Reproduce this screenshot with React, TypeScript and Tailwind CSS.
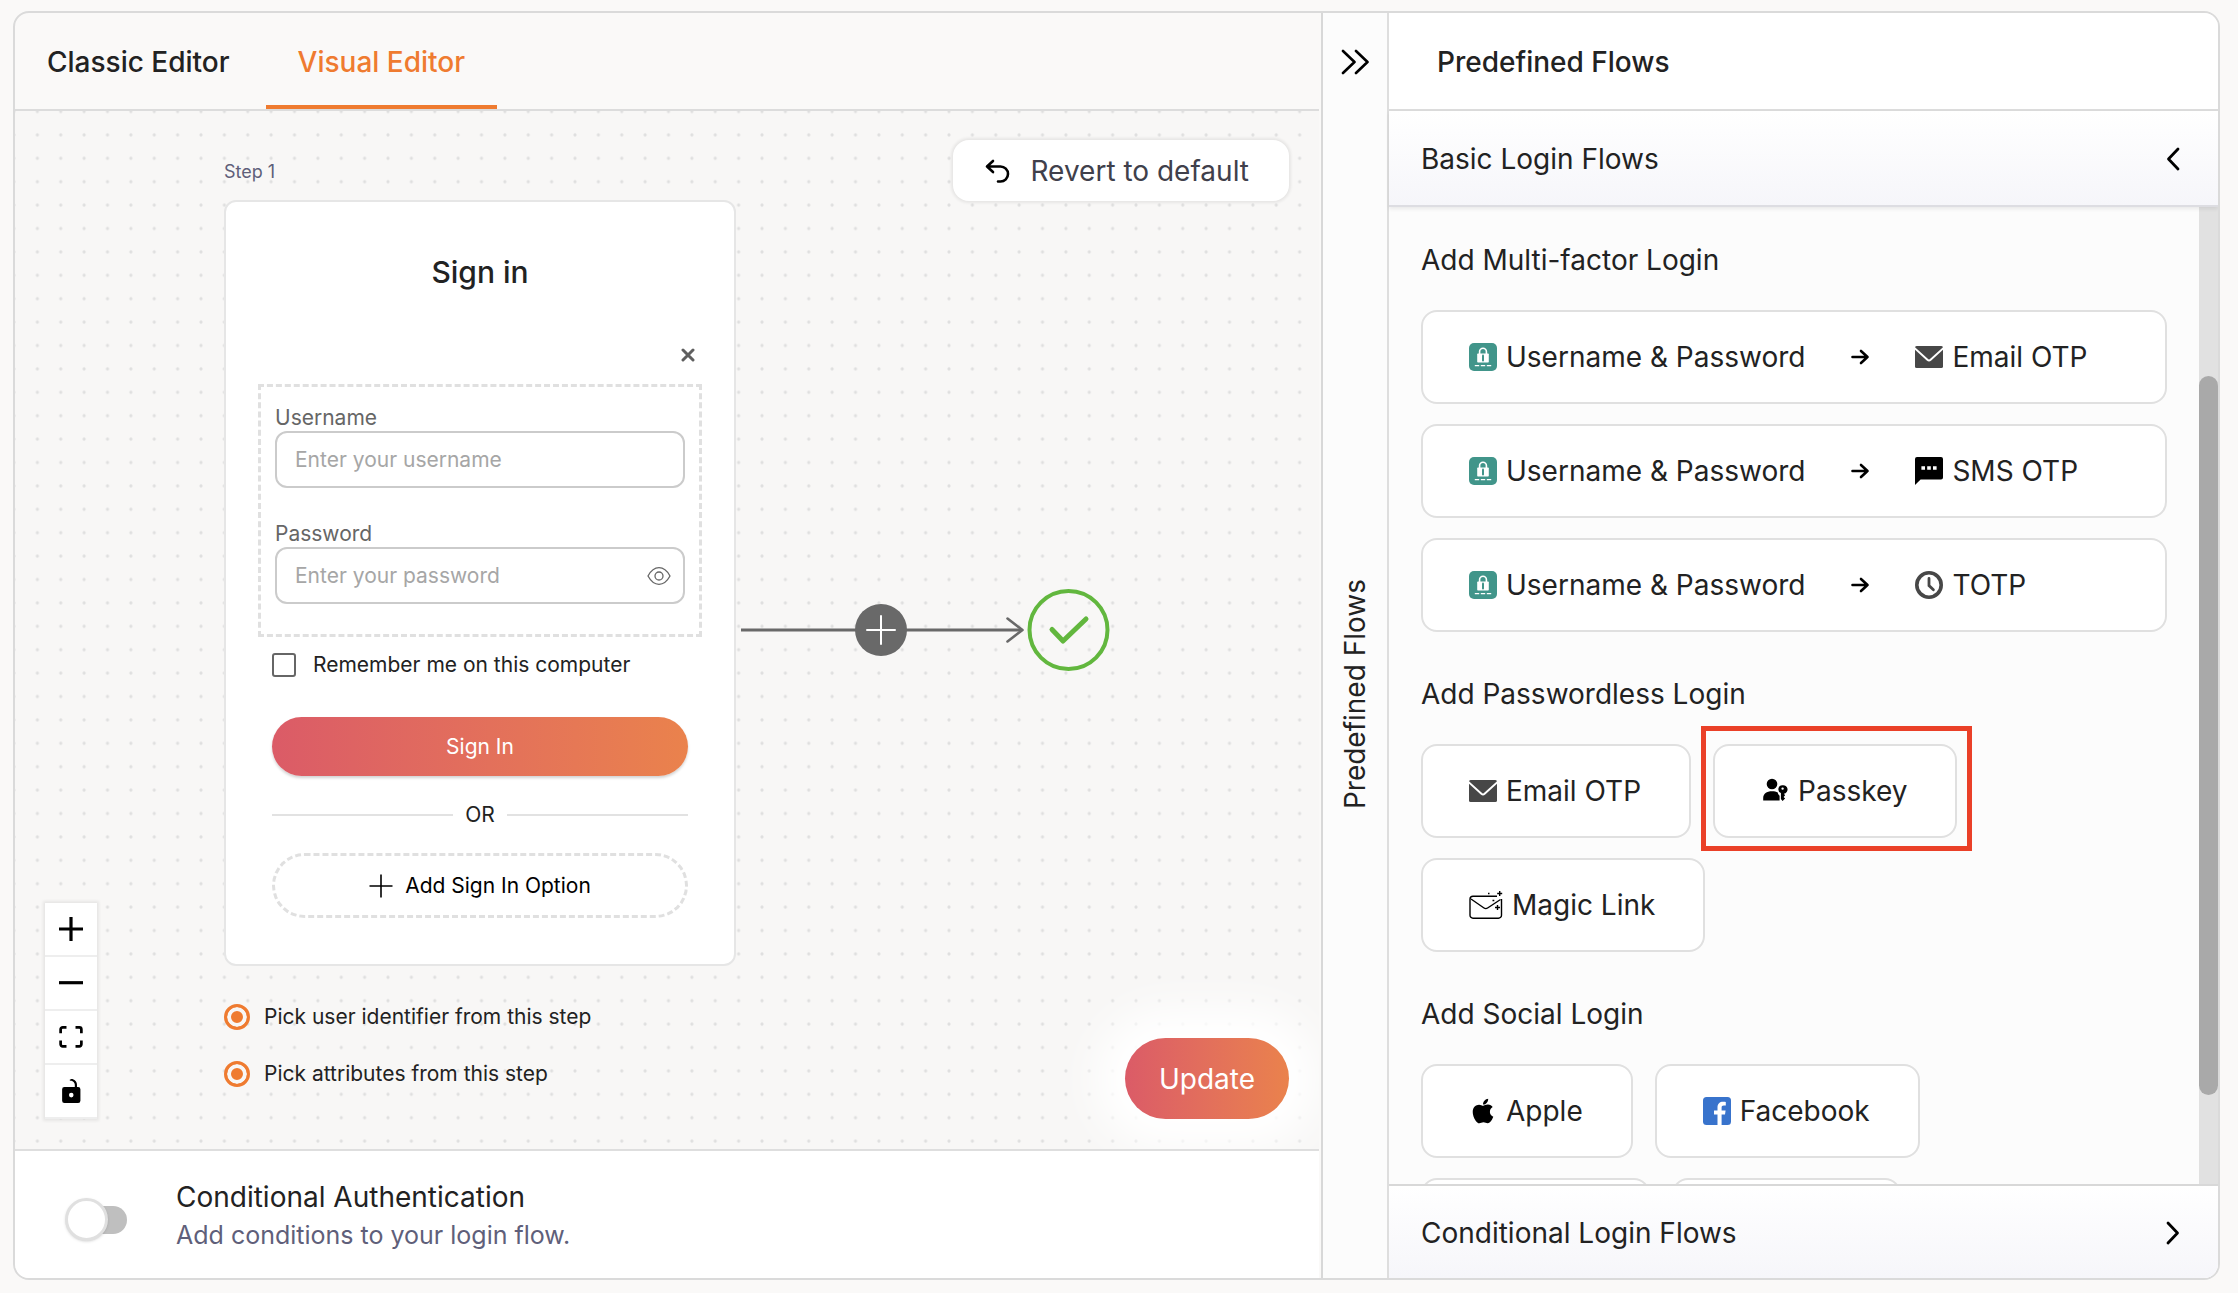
import React from "react";
import { FaApple } from "react-icons/fa";

const LockBadge = () => (
  <svg viewBox="0 0 28 28" className="size-7 shrink-0" aria-hidden="true">
    <rect width="28" height="28" rx="5" fill="#41958a" />
    <path d="M10.6 11V8.6a3.4 3.4 0 0 1 6.8 0V11" fill="none" stroke="#fff" strokeWidth="1.6" />
    <rect x="8.2" y="10.5" width="11.6" height="9" rx="0.8" fill="#fff" />
    <path d="M14 12.6v4.8" stroke="#41958a" strokeWidth="2" strokeLinecap="round" />
    <path d="M5.8 22.6h4.4M11.8 22.6h4.4M17.8 22.6h4.4" stroke="#fff" strokeWidth="1.4" />
  </svg>
);

const MailIcon = () => (
  <svg viewBox="0 0 28 28" className="size-7 shrink-0" aria-hidden="true">
    <rect y="3" width="28" height="22" rx="1.6" fill="#474747" />
    <path d="M-1 4.6 12.4 16.8q1.6 1.300 3.200 0L29 4.6" fill="none" stroke="#fff" strokeWidth="2" />
  </svg>
);

const ChatIcon = () => (
  <svg viewBox="0 0 28 28" className="size-7 shrink-0" aria-hidden="true">
    <path d="M2 0h24a2 2 0 0 1 2 2v18.4a2 2 0 0 1-2 2H5.6L0 28V2a2 2 0 0 1 2-2z" fill="#000" />
    <path d="M6.4 9.200h3.600v3.600H6.400zM12.200 9.200h3.600v3.600h-3.600zM18 9.200h3.600v3.600H18z" fill="#fff" />
  </svg>
);

const ClockIcon = () => (
  <svg viewBox="0 0 28 28" className="size-7 shrink-0" fill="none" stroke="#474747" aria-hidden="true">
    <circle cx="14" cy="14" r="12.2" strokeWidth="3.6" />
    <path d="M14 7.4v7.2l4.4 4.2" strokeWidth="2.8" strokeLinecap="round" />
  </svg>
);

const PasskeyIcon = () => (
  <svg viewBox="0 0 28 28" className="size-7 shrink-0" aria-hidden="true">
    <circle cx="11" cy="7" r="5.300" fill="#000" />
    <path d="M2.200 23.500v-2.500c0-4.400 3.400-6.800 8.800-6.800 2.400 0 4.300.5 5.800 1.400.1 1.300.8 2.400 1.800 3.100v4.800z" fill="#000" />
    <path d="M21.600 8.200a4 4 0 0 0-1.700 7.700v6l1.700 2.200 2.500-2.500-1.500-1.700 1.500-1.600-1.200-1.600A4.200 4.200 0 0 0 21.600 8.200zm0 2.200a1.200 1.200 0 1 1 0 2.400 1.200 1.200 0 0 1 0-2.400z" fill="#000" />
  </svg>
);

const MagicMailIcon = () => (
  <svg viewBox="0 0 34 28" className="h-7 w-[34px] shrink-0" fill="none" stroke="#000" aria-hidden="true">
    <path d="M28 5.200H4A3 3 0 0 0 1 8.200v16A3 3 0 0 0 4 27.200h25.500a3 3 0 0 0 3-3V8" strokeWidth="1.400" />
    <path d="M2 8 15 17q1.800 1.200 3.600 0L31.500 8.500" strokeWidth="1.400" />
    <path d="M30.700 0v5M28.200 2.500h5M28.500 14v5M26 16.500h5" strokeWidth="1.400" />
    <path d="M23.500 9.500h1.800M19 2.500h1.500" strokeWidth="1.600" />
  </svg>
);

const AppleIcon = () => <FaApple className="size-7 shrink-0 text-black" aria-hidden="true" />;

const FacebookIcon = () => (
  <svg viewBox="0 0 28 28" className="size-7 shrink-0" aria-hidden="true">
    <rect width="28" height="28" rx="3.500" fill="#3873cc" />
    <path d="M14.500 28V17.500H11V13.500h3.500v-3c0-3.800 2.300-5.700 5.500-5.700 1.300 0 2.300.1 2.800.2v3.600h-2c-1.700 0-2.200.8-2.200 2.100v2.800h4l-.6 4h-3.400V28z" fill="#fff" />
  </svg>
);

const ArrowIcon = () => (
  <svg viewBox="0 0 20 20" className="size-5 shrink-0" fill="none" stroke="#000" strokeWidth="2.600" strokeLinecap="round" strokeLinejoin="round" aria-hidden="true">
    <path d="M2.500 10h15M11 4l6.500 6-6.500 6" />
  </svg>
);

const Chevron = ({ left = false }: { left?: boolean }) => (
  <svg viewBox="0 0 14 24" className="h-6 w-3.5" fill="none" stroke="#000" strokeWidth="2.800" strokeLinecap="round" strokeLinejoin="round" aria-hidden="true">
    <path d={left ? "M12 2 2.500 12 12 22" : "M2 2l9.500 10L2 22"} />
  </svg>
);

const factors = [
  { label: "Email OTP", Icon: MailIcon },
  { label: "SMS OTP", Icon: ChatIcon },
  { label: "TOTP", Icon: ClockIcon },
];

const flowCard =
  "flex h-[94px] items-center gap-[9px] rounded-2xl border-2 border-[#e0e0e0] bg-white pr-12 pl-[46px]";

function FlowButton({ label, Icon }: { label: string; Icon: React.ComponentType }) {
  return (
    <button className={flowCard}>
      <Icon />
      {label}
    </button>
  );
}

function SignInStep() {
  return (
    <div className="absolute left-[209px] top-[49px] w-[512px] text-[21px] leading-7">
      <p className="text-[18px] leading-6 text-[#5f5f7a]">Step 1</p>
      <form
        className="mt-4 rounded-xl border-2 border-[#e6e6e6] bg-white px-8 pt-[50px] pb-[46px]"
        onSubmit={(e) => e.preventDefault()}
      >
        <h2 className="text-center text-[30px] leading-10 font-medium">Sign in</h2>
        <div className="mt-[51px] flex justify-end">
          <button type="button" aria-label="Remove" className="mr-0.5 flex size-6 items-center justify-center">
            <svg viewBox="0 0 14 14" className="size-3.5" stroke="#5f5f5f" strokeWidth="3" strokeLinecap="round">
              <path d="M2 2l10 10M12 2 2 12" />
            </svg>
          </button>
        </div>
        <div className="mt-[17px] border-3 border-dashed border-[#e0e0e0] px-3.5 pt-[17px] pb-[30px]">
          <label htmlFor="username" className="block leading-[27px] text-[#666]">Username</label>
          <input
            id="username"
            placeholder="Enter your username"
            className="block h-[57px] w-full rounded-xl border-2 border-[#cbcbcb] bg-white px-[18px] placeholder:text-[#a6a6a6]"
          />
          <label htmlFor="password" className="mt-8 block leading-[27px] text-[#666]">Password</label>
          <div className="relative">
            <input
              id="password"
              type="password"
              placeholder="Enter your password"
              className="block h-[57px] w-full rounded-xl border-2 border-[#cbcbcb] bg-white pr-14 pl-[18px] placeholder:text-[#a6a6a6]"
            />
            <button type="button" aria-label="Show password" className="absolute inset-y-0 right-3.5 flex items-center">
              <svg viewBox="0 0 24 20" className="h-5 w-6" fill="none" stroke="#666" strokeWidth="1.300">
                <path d="M1 10C4 4.500 7.500 1.700 12 1.700S20 4.500 23 10c-3 5.500-6.500 8.300-11 8.300S4 15.500 1 10z" />
                <circle cx="12" cy="10" r="4" />
              </svg>
            </button>
          </div>
        </div>
        <div className="px-3.5">
          <label className="mt-3.5 flex items-center gap-[17px] text-[#222]">
            <input type="checkbox" className="size-6 appearance-none rounded-[3px] border-2 border-[#666] bg-white" />
            Remember me on this computer
          </label>
          <button className="mt-[38px] h-[59px] w-full rounded-full bg-linear-to-r from-[#db5b67] to-[#ea824c] text-white shadow-[0_2px_3px_rgba(0,0,0,0.18)]">
            Sign In
          </button>
          <div className="mt-[25px] flex items-center gap-3 text-[#222]">
            <span className="h-0.5 flex-1 bg-[#e2e2e2]" />
            OR
            <span className="h-0.5 flex-1 bg-[#e2e2e2]" />
          </div>
          <button
            type="button"
            className="mt-6 flex h-[65px] w-full items-center justify-center gap-3 rounded-full border-3 border-dashed border-[#e0e0e0] text-black"
          >
            <svg viewBox="0 0 24 24" className="size-6" stroke="#000" strokeWidth="1.600">
              <path d="M12 .5v23M.5 12h23" />
            </svg>
            Add Sign In Option
          </button>
        </div>
      </form>
      <div className="mt-[37px] flex flex-col gap-[29px] text-[#222]">
        {["Pick user identifier from this step", "Pick attributes from this step"].map((t, i) => (
          <label key={t} className="flex items-center gap-3.5">
            <input
              type="radio"
              name={`step-option-${i}`}
              defaultChecked
              className="size-[26px] appearance-none rounded-full border-3 border-[#ef7b30] bg-[#ef7b30] shadow-[inset_0_0_0_4px_#f8f7f6]"
            />
            {t}
          </label>
        ))}
      </div>
    </div>
  );
}

const controls = [
  { label: "Zoom in", box: "0 0 32 32", size: "size-6", d: "M32 18.133H18.133V32h-4.266V18.133H0v-4.266h13.867V0h4.266v13.867H32z" },
  { label: "Zoom out", box: "0 0 32 5", size: "h-1 w-6", d: "M0 0h32v4.200H0z" },
  { label: "Fit view", box: "0 0 32 30", size: "h-[22px] w-6", d: "M3.692 4.630c0-.53.4-.938.939-.938h5.215V0H4.708C2.130 0 0 2.054 0 4.630v5.216h3.692V4.631zM27.354 0h-5.200v3.692h5.170c.530 0 .984.4.984.939v5.215H32V4.631A4.624 4.624 0 0027.354 0zm.954 24.830c0 .532-.4.940-.939.940h-5.215v3.768h5.215c2.577 0 4.631-2.130 4.631-4.707v-5.139h-3.692v5.139zm-23.677.940c-.531 0-.939-.4-.939-.940v-5.138H0v5.139c0 2.577 2.130 4.707 4.708 4.707h5.138V25.770H4.631z" },
  { label: "Toggle lock", box: "0 0 25 32", size: "h-6 w-[19px]", d: "M21.333 10.667H19.810V7.619C19.810 3.429 16.380 0 12.190 0c-4.114 1.828-1.370 2.133.305 2.438 1.676.305 4.420 2.590 4.420 5.181v3.048H3.047A3.056 3.056 0 000 13.714v15.238A3.056 3.056 0 003.048 32h18.285a3.056 3.056 0 003.048-3.048V13.714a3.056 3.056 0 00-3.048-3.047zM12.190 24.533a3.056 3.056 0 01-3.047-3.047 3.056 3.056 0 013.047-3.048 3.056 3.056 0 013.048 3.048 3.056 3.056 0 01-3.048 3.047z" },
];

function Canvas() {
  return (
    <div className="relative min-h-0 flex-1 overflow-hidden bg-[#f8f7f6]">
      <svg className="absolute inset-0 size-full" aria-hidden="true">
        <defs>
          <pattern id="dots" width="23.375" height="23.400" patternUnits="userSpaceOnUse" x="-1" y="-11.200">
            <circle cx="0" cy="11.700" r="1.600" fill="#dfdfdf" />
            <circle cx="23.375" cy="11.700" r="1.600" fill="#dfdfdf" />
          </pattern>
        </defs>
        <rect width="100%" height="100%" fill="url(#dots)" />
      </svg>
      <SignInStep />
      <svg viewBox="0 0 370 84" className="absolute left-[726px] top-[477px] h-[84px] w-[370px]" fill="none" aria-hidden="true">
        <path d="M0 42h281" stroke="#696969" strokeWidth="3" />
        <path d="M266.500 30.500 281.500 42l-15 11.500" stroke="#696969" strokeWidth="2.600" strokeLinecap="round" strokeLinejoin="round" />
        <circle cx="327.500" cy="42" r="39" stroke="#62b73e" strokeWidth="4" />
        <path d="M311 41.500 322 53 345 31" stroke="#62b73e" strokeWidth="5" strokeLinecap="round" strokeLinejoin="round" />
      </svg>
      <button aria-label="Add step" className="absolute left-[840px] top-[493px] flex size-[52px] items-center justify-center rounded-full bg-[#696969]">
        <svg viewBox="0 0 30 30" className="size-[30px]" stroke="#fff" strokeWidth="2" strokeLinecap="round">
          <path d="M15 1v28M1 15h28" />
        </svg>
      </button>
      <button className="absolute right-[30px] top-[29px] flex h-[61px] items-center gap-5 rounded-2xl bg-white pr-10 pl-8 text-[#40404b] shadow-[0_0_3px_2px_rgba(0,0,0,0.07)]">
        <svg viewBox="0 0 26 24" className="h-6 w-[26px]" fill="none" stroke="#000" strokeWidth="2.600" strokeLinecap="round" strokeLinejoin="round" aria-hidden="true">
          <path d="M8 2 2 7.500 8 13M2 7.500h13.500a7.500 7.500 0 0 1 0 15H13" />
        </svg>
        Revert to default
      </button>
      <div className="absolute bottom-[30px] left-[30px] w-[52px] bg-white shadow-[0_0_3px_2px_rgba(0,0,0,0.07)]">
        {controls.map((c) => (
          <button key={c.label} aria-label={c.label} className="flex h-[54px] w-full items-center justify-center border-b-2 border-[#eee]">
            <svg viewBox={c.box} className={c.size}>
              <path d={c.d} />
            </svg>
          </button>
        ))}
      </div>
      <button className="absolute right-[30px] bottom-[30px] h-[81px] rounded-full bg-linear-to-r from-[#db5b67] to-[#ea824c] px-[34px] text-white shadow-[0_0_45px_30px_#fff]">
        Update
      </button>
    </div>
  );
}

export default function App() {
  return (
    <div className="h-screen bg-[#faf9f8] pt-[11px] pr-[18px] pb-[13px] pl-[13px] font-['Inter',sans-serif] text-[28px] leading-8 text-[#222]">
      <div className="flex h-full overflow-hidden rounded-2xl border-2 border-[#dadada]">
        <main className="flex min-w-0 flex-1 flex-col pr-0.5">
          <div role="tablist" className="flex h-[98px] shrink-0 border-b-2 border-[#dcdcdc] font-medium">
            <button role="tab" aria-selected="false" className="pt-0.5 pr-9 pl-8">Classic Editor</button>
            <button role="tab" aria-selected="true" className="border-b-4 border-[#ef7b30] px-8 pt-1.5 text-[#ef7b30]">
              Visual Editor
            </button>
          </div>
          <Canvas />
          <label className="flex h-[129px] shrink-0 items-center border-t-2 border-[#dedede] bg-white pt-0.5 pl-[50px]">
            <span className="relative mt-2 flex h-11 w-[62px] shrink-0 items-center">
              <input type="checkbox" role="switch" className="peer ml-3.5 h-7 w-12 appearance-none rounded-full bg-[#bfbfbf]" />
              <span className="absolute left-0 size-[43px] rounded-full border-3 border-[#e0e0e0] bg-white shadow-sm peer-checked:left-5" />
            </span>
            <span className="ml-[49px] block">
              <span className="block leading-[38px]">Conditional Authentication</span>
              <span className="block text-[25px] leading-[38px] text-[#5f5f7a]">Add conditions to your login flow.</span>
            </span>
          </label>
        </main>

        <div className="flex w-[66px] shrink-0 flex-col items-center border-l-2 border-[#d8d8d8] bg-[#fcfcfc]">
          <button aria-label="Collapse panel" className="flex h-[98px] items-center">
            <svg viewBox="0 0 28 26" className="h-[26px] w-7" fill="none" stroke="#000" strokeWidth="2.600" strokeLinecap="round" strokeLinejoin="round">
              <path d="M2 2l11.500 11L2 24M15 2l11.500 11L15 24" />
            </svg>
          </button>
          <div className="flex flex-1 items-center">
            <span className="rotate-180 [writing-mode:vertical-rl]">Predefined Flows</span>
          </div>
        </div>

        <aside className="flex w-[831px] shrink-0 flex-col border-l-2 border-[#dedede] bg-white">
          <h1 className="flex h-[98px] shrink-0 items-center border-b-2 border-[#dcdcdc] px-12 pt-0.5 font-medium">Predefined Flows</h1>
          <button className="relative flex h-24 shrink-0 items-center justify-between border-b-2 border-[#dddde2] bg-linear-to-b from-white to-[#f6f6fa] pt-0.5 pr-[38px] pl-8 shadow-[0_2px_4px_rgba(0,0,0,0.08)]">
            Basic Login Flows
            <Chevron left />
          </button>
          <div className="flex min-h-0 flex-1 overflow-hidden bg-[#fcfcfc]">
            <div className="min-w-0 flex-1 pt-[37px] pr-8 pl-8">
              <h2>Add Multi-factor Login</h2>
              <div className="mt-[34px] flex flex-col gap-5">
                {factors.map(({ label, Icon }) => (
                  <button key={label} className={flowCard}>
                    <LockBadge />
                    Username &amp; Password
                    <span className="px-9">
                      <ArrowIcon />
                    </span>
                    <Icon />
                    {label}
                  </button>
                ))}
              </div>

              <h2 className="mt-[46px]">Add Passwordless Login</h2>
              <div className="mt-[34px] flex flex-wrap gap-x-[22px] gap-y-5 pr-40">
                <FlowButton label="Email OTP" Icon={MailIcon} />
                <div className="relative">
                  <FlowButton label="Passkey" Icon={PasskeyIcon} />
                  <span className="pointer-events-none absolute -top-[18px] -right-[15px] -bottom-[13px] -left-3 border-5 border-[#ea4028]" />
                </div>
                <FlowButton label="Magic Link" Icon={MagicMailIcon} />
              </div>

              <h2 className="mt-[46px]">Add Social Login</h2>
              <div className="mt-[34px] flex flex-wrap gap-x-[22px] gap-y-5 pr-40">
                <FlowButton label="Apple" Icon={AppleIcon} />
                <FlowButton label="Facebook" Icon={FacebookIcon} />
              </div>
              <div className="mt-5 flex gap-[22px]">
                <button aria-label="More social login" className="h-[94px] w-[229px] rounded-2xl border-2 border-[#e0e0e0] bg-white" />
                <button aria-label="More social login" className="h-[94px] w-[229px] rounded-2xl border-2 border-[#e0e0e0] bg-white" />
              </div>
            </div>
            <div className="w-[19px] shrink-0 bg-[#e1e1e1]">
              <div className="h-[17.300%]" />
              <div className="h-[73.600%] rounded-full bg-[#a9a9a9]" />
            </div>
          </div>
          <button className="relative flex h-[94px] shrink-0 items-center justify-between border-t-2 border-[#d8d8d8] bg-linear-to-b from-white to-[#f6f6fa] pt-0.5 pr-[38px] pl-8">
            Conditional Login Flows
            <Chevron />
          </button>
        </aside>
      </div>
    </div>
  );
}
